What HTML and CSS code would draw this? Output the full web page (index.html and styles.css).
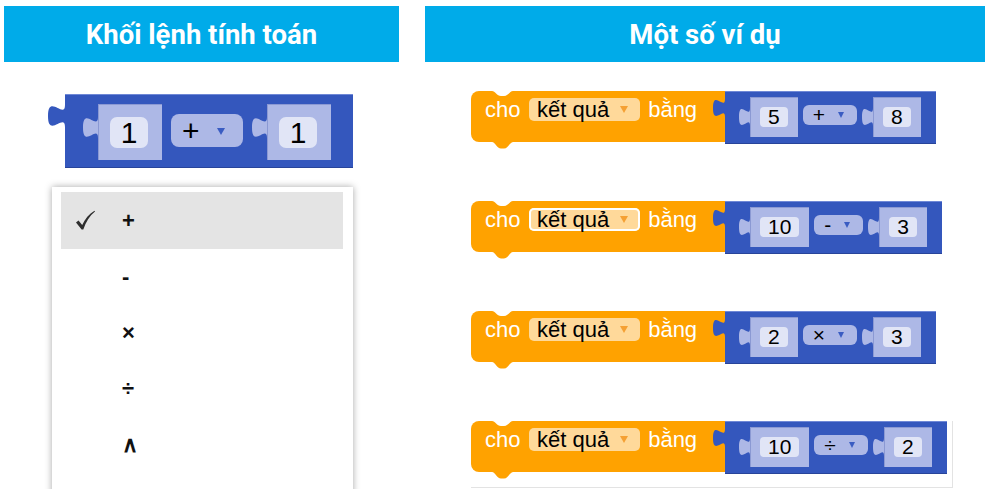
FILE: index.html
```html
<!DOCTYPE html>
<html>
<head>
<meta charset="utf-8">
<link rel="stylesheet" href="styles.css">
</head>
<body>
<div class="page">
  <section class="col-left">
    <div class="head">Khối lệnh tính toán</div>
    <div class="big-wrap">
      <div class="calc big">
        <svg class="otab" viewBox="0 0 8 15" preserveAspectRatio="none"><path d="M8,0 C8,10 0,-8 0,7.5 S8,5 8,15 Z"/></svg>
        <div class="slot">
          <svg class="stab" viewBox="0 0 8 15" preserveAspectRatio="none"><path d="M8,0 C8,10 0,-8 0,7.5 S8,5 8,15 Z"/></svg>
          <div class="num">1</div>
        </div>
        <div class="dd"><span class="op">+</span><span class="tri"></span></div>
        <div class="slot">
          <svg class="stab" viewBox="0 0 8 15" preserveAspectRatio="none"><path d="M8,0 C8,10 0,-8 0,7.5 S8,5 8,15 Z"/></svg>
          <div class="num">1</div>
        </div>
      </div>
    </div>
    <div class="menu">
      <div class="item sel">
        <svg class="check" viewBox="0 0 20 20"><path d="M1,12.5 L3.5,10.5 L7.2,15 C10,9 14,4 19.5,0.8 L20,1.6 C14.5,6 11,12 8.3,19.5 L6.6,19.5 Z"/></svg>
        <span class="sym">+</span>
      </div>
      <div class="item"><span class="sym">-</span></div>
      <div class="item"><span class="sym">×</span></div>
      <div class="item"><span class="sym">÷</span></div>
      <div class="item"><span class="sym">∧</span></div>
    </div>
  </section>

  <section class="col-right">
    <div class="head">Một số ví dụ</div>
    <div class="rows">
      <div class="row">
        <div class="stmt">
          <svg class="notch" viewBox="0 0 21 6"><path d="M0,0 C3,0 5,5 9,5 L12,5 C16,5 18,0 21,0 Z"/></svg>
          <span class="lbl">cho</span>
          <span class="var">kết quả<span class="otri"></span></span>
          <span class="lbl">bằng</span>
          <svg class="btab" viewBox="0 0 21 7"><path d="M0,0 C3,0 5,6.5 9,6.5 L12,6.5 C16,6.5 18,0 21,0 Z"/></svg>
        </div>
        <div class="calc small">
          <svg class="otab" viewBox="0 0 8 15" preserveAspectRatio="none"><path d="M8,0 C8,10 0,-8 0,7.5 S8,5 8,15 Z"/></svg>
          <div class="slot"><svg class="stab" viewBox="0 0 8 15" preserveAspectRatio="none"><path d="M8,0 C8,10 0,-8 0,7.5 S8,5 8,15 Z"/></svg><div class="num">5</div></div>
          <div class="dd"><span class="op">+</span><span class="tri"></span></div>
          <div class="slot"><svg class="stab" viewBox="0 0 8 15" preserveAspectRatio="none"><path d="M8,0 C8,10 0,-8 0,7.5 S8,5 8,15 Z"/></svg><div class="num">8</div></div>
        </div>
      </div>

      <div class="row">
        <div class="stmt">
          <svg class="notch" viewBox="0 0 21 6"><path d="M0,0 C3,0 5,5 9,5 L12,5 C16,5 18,0 21,0 Z"/></svg>
          <span class="lbl">cho</span>
          <span class="var active">kết quả<span class="otri"></span></span>
          <span class="lbl">bằng</span>
          <svg class="btab" viewBox="0 0 21 7"><path d="M0,0 C3,0 5,6.5 9,6.5 L12,6.5 C16,6.5 18,0 21,0 Z"/></svg>
        </div>
        <div class="calc small">
          <svg class="otab" viewBox="0 0 8 15" preserveAspectRatio="none"><path d="M8,0 C8,10 0,-8 0,7.5 S8,5 8,15 Z"/></svg>
          <div class="slot"><svg class="stab" viewBox="0 0 8 15" preserveAspectRatio="none"><path d="M8,0 C8,10 0,-8 0,7.5 S8,5 8,15 Z"/></svg><div class="num">10</div></div>
          <div class="dd"><span class="op">-</span><span class="tri"></span></div>
          <div class="slot"><svg class="stab" viewBox="0 0 8 15" preserveAspectRatio="none"><path d="M8,0 C8,10 0,-8 0,7.5 S8,5 8,15 Z"/></svg><div class="num">3</div></div>
        </div>
      </div>

      <div class="row">
        <div class="stmt">
          <svg class="notch" viewBox="0 0 21 6"><path d="M0,0 C3,0 5,5 9,5 L12,5 C16,5 18,0 21,0 Z"/></svg>
          <span class="lbl">cho</span>
          <span class="var">kết quả<span class="otri"></span></span>
          <span class="lbl">bằng</span>
          <svg class="btab" viewBox="0 0 21 7"><path d="M0,0 C3,0 5,6.5 9,6.5 L12,6.5 C16,6.5 18,0 21,0 Z"/></svg>
        </div>
        <div class="calc small">
          <svg class="otab" viewBox="0 0 8 15" preserveAspectRatio="none"><path d="M8,0 C8,10 0,-8 0,7.5 S8,5 8,15 Z"/></svg>
          <div class="slot"><svg class="stab" viewBox="0 0 8 15" preserveAspectRatio="none"><path d="M8,0 C8,10 0,-8 0,7.5 S8,5 8,15 Z"/></svg><div class="num">2</div></div>
          <div class="dd"><span class="op">×</span><span class="tri"></span></div>
          <div class="slot"><svg class="stab" viewBox="0 0 8 15" preserveAspectRatio="none"><path d="M8,0 C8,10 0,-8 0,7.5 S8,5 8,15 Z"/></svg><div class="num">3</div></div>
        </div>
      </div>

      <div class="row framed">
        <div class="stmt">
          <svg class="notch" viewBox="0 0 21 6"><path d="M0,0 C3,0 5,5 9,5 L12,5 C16,5 18,0 21,0 Z"/></svg>
          <span class="lbl">cho</span>
          <span class="var">kết quả<span class="otri"></span></span>
          <span class="lbl">bằng</span>
          <svg class="btab" viewBox="0 0 21 7"><path d="M0,0 C3,0 5,6.5 9,6.5 L12,6.5 C16,6.5 18,0 21,0 Z"/></svg>
        </div>
        <div class="calc small">
          <svg class="otab" viewBox="0 0 8 15" preserveAspectRatio="none"><path d="M8,0 C8,10 0,-8 0,7.5 S8,5 8,15 Z"/></svg>
          <div class="slot"><svg class="stab" viewBox="0 0 8 15" preserveAspectRatio="none"><path d="M8,0 C8,10 0,-8 0,7.5 S8,5 8,15 Z"/></svg><div class="num">10</div></div>
          <div class="dd"><span class="op">÷</span><span class="tri"></span></div>
          <div class="slot"><svg class="stab" viewBox="0 0 8 15" preserveAspectRatio="none"><path d="M8,0 C8,10 0,-8 0,7.5 S8,5 8,15 Z"/></svg><div class="num">2</div></div>
        </div>
      </div>
    </div>
  </section>
</div>
</body>
</html>
```

FILE: styles.css
```css
* { box-sizing: border-box; }

html, body {
  margin: 0;
  background: #ffffff;
}

body {
  width: 990px;
  height: 489px;
  overflow: hidden;
  font-family: "Liberation Sans", Arial, sans-serif;
  color: #000;
}

.page {
  display: flex;
  gap: 26px;
  padding: 6px 0 0 4px;
}

.col-left { width: 395px; flex: none; }
.col-right { width: 560px; flex: none; }

.head {
  height: 56px;
  background: #00abe9;
  color: #ffffff;
  font-family: Roboto, "Noto Sans", sans-serif;
  font-weight: 700;
  font-size: 27.5px;
  display: flex;
  align-items: center;
  justify-content: center;
}

/* ---------- calc blocks (blue) ---------- */
.calc {
  position: relative;
  display: inline-flex;
  align-items: flex-start;
  background: #3457bd;
  box-shadow: inset 0 1px 0 #6f88d6, inset 0 -1px 0 #28449a;
}

.calc svg { position: absolute; overflow: visible; }
.otab path { fill: #3457bd; }
.stab path { fill: #adb8e6; }

.slot {
  position: relative;
  background: #adb8e6;
  box-shadow: inset 1px 1px 0 #8b99d3;
}

.num {
  background: #e1e5f6;
  display: flex;
  align-items: center;
  justify-content: center;
  color: #000;
}

.dd {
  display: flex;
  align-items: center;
  background: #adb8e6;
  color: #000;
}

.tri {
  width: 0;
  height: 0;
  border-left: 4px solid transparent;
  border-right: 4px solid transparent;
  border-top: 7px solid #3a5cc2;
}

/* big variant */
.big-wrap { padding: 32px 0 0 61px; }

.calc.big {
  height: 74px;
  padding: 10px 22px 0 18px;
}
.calc.big .otab { left: -17px; top: 11px; width: 17px; height: 22px; }
.calc.big .slot {
  margin-left: 15px;
  padding: 13px 14px 12px 12px;
}
.calc.big .stab { left: -15px; top: 13px; width: 15px; height: 21px; }
.calc.big .num {
  width: 38px;
  height: 31px;
  border-radius: 7px;
  font-size: 30px;
}
.calc.big .dd {
  margin: 10px 9px 0 9px;
  width: 72px;
  height: 33px;
  border-radius: 8px;
  padding-left: 11px;
  font-size: 30px;
}
.calc.big .dd .tri { margin-left: 17px; margin-top: 2px; }

/* small variant */
.calc.small {
  height: 53px;
  padding: 6px 15px 0 14px;
}
.calc.small .otab { left: -12px; top: 8px; width: 12px; height: 18px; }
.calc.small .slot {
  margin-left: 11px;
  padding: 10px;
}
.calc.small .stab { left: -11px; top: 11px; width: 11px; height: 18px; }
.calc.small .num {
  height: 20px;
  min-width: 27px;
  padding: 0 8px;
  border-radius: 4px;
  font-size: 21px;
}
.calc.small .dd {
  margin: 8px 5px 0 5px;
  height: 20px;
  border-radius: 6px;
  padding: 0 13px 0 10px;
  font-size: 21px;
}
.calc.small .dd .tri {
  margin-left: 13px;
  border-left-width: 3.5px;
  border-right-width: 3.5px;
  border-top-width: 6px;
}

/* ---------- menu ---------- */
.menu {
  margin: 19px 0 0 48px;
  width: 301px;
  height: 320px;
  background: #ffffff;
  box-shadow: 0 0 7px rgba(0, 0, 0, 0.35);
  padding: 5px 10px 0 9px;
}

.item {
  position: relative;
  height: 56px;
  display: flex;
  align-items: center;
  padding-left: 61px;
}
.item.sel { background: #e4e4e4; height: 57px; }

.sym {
  font-weight: 700;
  font-size: 22px;
  color: #111;
}

.check {
  position: absolute;
  left: 14px;
  top: 18px;
  width: 20px;
  height: 20px;
}
.check path { fill: #2e2e2e; }

/* ---------- statement rows ---------- */
.rows {
  display: flex;
  flex-direction: column;
  gap: 57px;
  padding: 29px 0 0 46px;
}

.row {
  display: flex;
  align-items: flex-start;
  height: 53px;
}

.row.framed {
  width: 482px;
  height: 67px;
  border-right: 1px solid #e3e3e3;
  border-bottom: 1px solid #e3e3e3;
}

.stmt {
  position: relative;
  width: 254px;
  height: 51px;
  flex: none;
  background: #ffa200;
  border-radius: 8px 0 0 8px;
  display: flex;
  align-items: flex-start;
  padding: 7px 0 0 14px;
  color: #fff;
  font-size: 22px;
  line-height: 23px;
}

.stmt .notch {
  position: absolute;
  left: 21px;
  top: 0;
  width: 21px;
  height: 6px;
}
.stmt .notch path { fill: #ffffff; }

.stmt .btab {
  position: absolute;
  left: 21px;
  top: 100%;
  width: 21px;
  height: 7px;
}
.stmt .btab path { fill: #ffa200; }

.lbl { margin-right: 8.5px; }

.var {
  display: flex;
  align-items: center;
  height: 23px;
  background: #ffd99a;
  color: #000;
  border-radius: 5px;
  padding: 0 12px 0 8px;
  margin-right: 8px;
}
.var.active { box-shadow: inset 0 0 0 2px #ffffff; }

.otri {
  margin-left: 11px;
  width: 0;
  height: 0;
  border-left: 4px solid transparent;
  border-right: 4px solid transparent;
  border-top: 7px solid #f5a033;
}
```
